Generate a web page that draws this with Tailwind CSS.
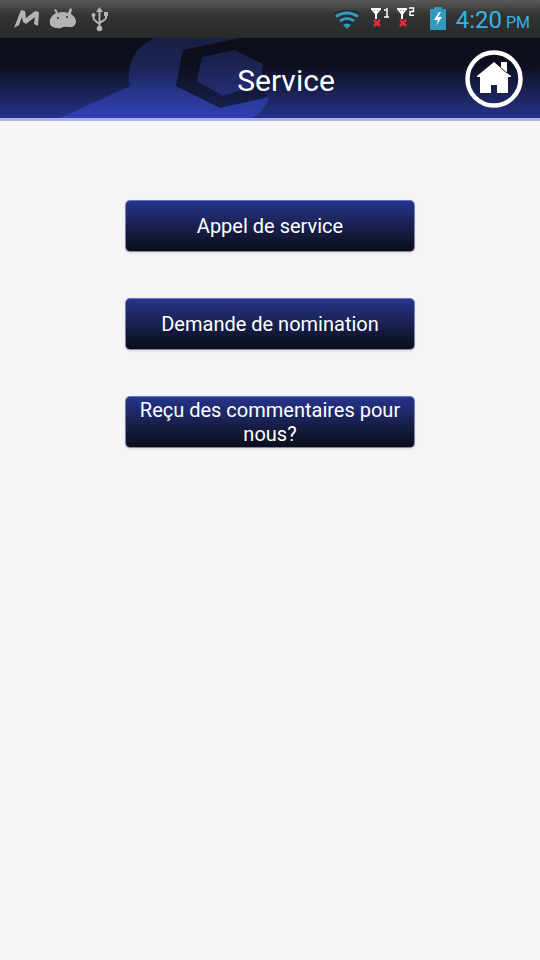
<!DOCTYPE html>
<html lang="fr">
<head>
    <meta charset="UTF-8">
    <meta name="viewport" content="width=device-width, initial-scale=1.0">
    <title>Service</title>
    <script src="https://cdn.jsdelivr.net/npm/@tailwindcss/browser@4"></script>
</head>
<body class="min-h-screen bg-[#f6f6f6] font-[Roboto,sans-serif] text-white">

<!-- Status bar -->
<div class="flex h-[38px] items-center justify-between bg-linear-to-b from-[#585858] via-[#333333] via-40% to-[#292929] pl-3 pr-[10px]">
    <div class="flex items-center">
        <svg class="h-[38px] w-[100px]" viewBox="12 0 100 38" fill="#b4b4b4" aria-hidden="true">
            <path d="M14 28L21 10L25 11L26 18L35 11L39 12L38 26L34 24L35 17L26 24L23 22L22 17L19 25Z" />
            <path d="M54 10L56 9L58 13Q62 11 68 13L70 8L72 9L71 14Q76 17 76 22Q75 28 69 27Q64 26 61 28Q56 29 51 26Q48 21 52 16Q54 14 56 13Z" />
            <circle cx="58" cy="18" r="1" fill="#333333" />
            <circle cx="67" cy="17" r="1" fill="#333333" />
            <path d="M99.500 7L103 12H96Z" />
            <circle cx="99.500" cy="28.500" r="2.800" />
            <circle cx="93.500" cy="15" r="2" />
            <path d="M104 12h4v4h-4z" />
            <path d="M99.500 11V28M93.500 15V18Q93.500 20 99.500 24M106 15V18Q106 19 99.500 23" fill="none" stroke="#b4b4b4" stroke-width="2" />
        </svg>
    </div>
    <div class="flex items-center gap-[6px]">
        <svg class="h-[38px] w-[118px]" viewBox="332 0 118 38" aria-hidden="true">
            <path d="M333 13Q347 7 361 13L347 29Z" fill="#252b2e" />
            <g fill="none" stroke="#3199c2" stroke-width="3">
                <path d="M336 16.500Q347 9.500 358 16.500" />
                <path d="M340 21Q347 16 354 21" />
            </g>
            <path d="M343 25Q347 22 351 25L347 29Z" fill="#3199c2" />
            <g fill="none" stroke="#ffffff" stroke-width="2">
                <path d="M371 9H381M372 9L376 14L380 9M376 8V19" />
                <path d="M384 10H386M387 8V17M384 17H389" stroke-width="1.500" />
                <path d="M397 9H407M398 9L402 14L406 9M402 8V19" />
                <path d="M409 8H413.500V11.500H410V15.250H414" stroke-width="1.500" />
            </g>
            <g fill="none" stroke="#dc2f37" stroke-width="2.500">
                <path d="M374 20L380 26M380 20L374 26" />
                <path d="M400 20L406 26M406 20L400 26" />
            </g>
            <path d="M434 7H442V9H446V30H430V9H434Z" fill="#3199bd" />
            <path d="M439 12L434 20H438L436 26L442 17H438L441 12Z" fill="#ffffff" />
        </svg>
        <div class="flex items-baseline gap-1 pt-[2px] text-[#33b5e5]">
            <span class="text-2xl leading-9">4:20</span>
            <span class="text-base">PM</span>
        </div>
    </div>
</div>

<!-- Header -->
<header class="relative flex h-[83px] items-center justify-center overflow-hidden border-b-3 border-[#aab2e6] bg-linear-to-b from-[#0c0e1b] from-30% to-[#26328a]">
    <svg class="absolute left-0 top-0 h-20 w-[280px]" viewBox="0 0 280 80" aria-hidden="true">
        <defs>
            <linearGradient id="wrench" x1="0" y1="0" x2="0" y2="80" gradientUnits="userSpaceOnUse">
                <stop offset="0" stop-color="#181e44" />
                <stop offset="0.400" stop-color="#1d2558" />
                <stop offset="0.700" stop-color="#283690" />
                <stop offset="1" stop-color="#3040b4" />
            </linearGradient>
            <linearGradient id="nut" x1="0" y1="12" x2="0" y2="58" gradientUnits="userSpaceOnUse">
                <stop offset="0" stop-color="#181e44" />
                <stop offset="1" stop-color="#232e76" />
            </linearGradient>
        </defs>
        <path d="M60 80L130 48C125 28 136 7 155 0H240L183 12L176 48L220 70L269 59Q265 72 253 80Z" fill="url(#wrench)" />
        <path d="M183 12L240 0L263 26L260 46L268 59L220 70L176 48Z" fill="#0c0e1b" fill-opacity="0.4" />
        <path d="M202 19L235 12L263 26L260 46L223 58L197 43Z" fill="url(#nut)" />
    </svg>
    <h1 class="relative pl-8 pt-[6px] text-3xl leading-9">Service</h1>
    <a href="#" aria-label="Accueil" class="absolute right-[17px] top-3">
        <svg class="size-[58px]" viewBox="0 0 58 58" aria-hidden="true">
            <circle cx="29" cy="29" r="26.500" fill="none" stroke="#ffffff" stroke-width="4.500" />
            <path d="M29 12L36 18V12H42V23L46 26V27H43V43H32V35H26V43H15V27H12V26Z" fill="#ffffff" />
            <path d="M36 18L42 23" stroke="#20264f" stroke-width="1" />
        </svg>
    </a>
</header>

<!-- Menu -->
<main class="flex flex-col items-center gap-[46px] px-4 pt-[79px]">
    <button type="button" class="flex h-[52px] w-full max-w-[290px] items-center justify-center rounded-[5px] border border-[#8086ae] border-t-[#6576cf] bg-linear-to-b from-[#27348d] to-[#0b0d18] px-2 text-xl leading-6 shadow-sm">Appel de service</button>
    <button type="button" class="flex h-[52px] w-full max-w-[290px] items-center justify-center rounded-[5px] border border-[#8086ae] border-t-[#6576cf] bg-linear-to-b from-[#27348d] to-[#0b0d18] px-2 text-xl leading-6 shadow-sm">Demande de nomination</button>
    <button type="button" class="flex h-[52px] w-full max-w-[290px] items-center justify-center rounded-[5px] border border-[#8086ae] border-t-[#6576cf] bg-linear-to-b from-[#27348d] to-[#0b0d18] px-2 text-xl leading-6 shadow-sm">Reçu des commentaires pour nous?</button>
</main>

</body>
</html>
